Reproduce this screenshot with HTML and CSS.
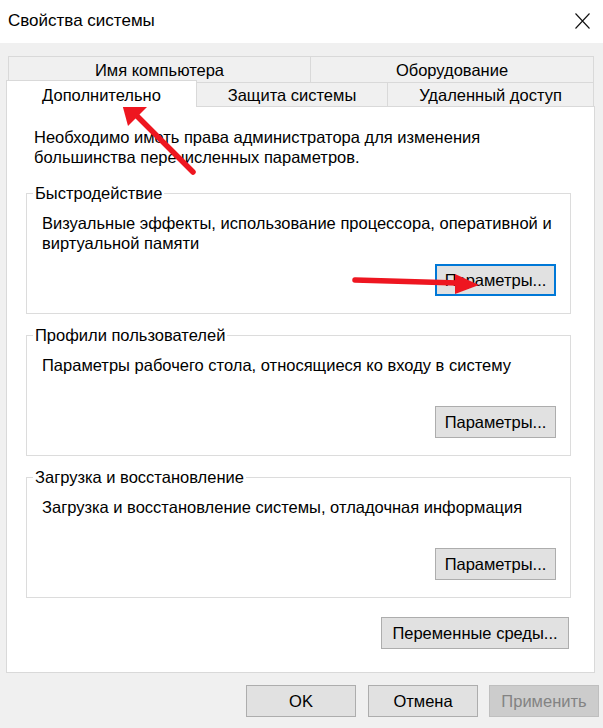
FILE: index.html
```html
<!DOCTYPE html>
<html lang="ru">
<head>
    <meta charset="UTF-8">
    <meta name="viewport" content="width=device-width, initial-scale=1.0">
    <title>Свойства системы</title>
    <link rel="stylesheet" href="styles.css">
</head>
<body>
<div class="window">

    <!-- Заголовок окна -->
    <div class="titlebar">
        <span class="title">Свойства системы</span>
        <svg class="close" width="15" height="16" viewBox="0 0 15 16">
            <path d="M0.5 0.5 L14.5 15.5 M14.5 0.5 L0.5 15.5" stroke="#111" stroke-width="1.1" fill="none"/>
        </svg>
    </div>

    <!-- Вкладки -->
    <div class="tabs">
        <div class="tab-row row-back">
            <div class="tab">Имя компьютера</div>
            <div class="tab">Оборудование</div>
        </div>
        <div class="tab-row row-front">
            <div class="tab active">Дополнительно</div>
            <div class="tab">Защита системы</div>
            <div class="tab">Удаленный доступ</div>
        </div>
    </div>

    <!-- Содержимое вкладки -->
    <div class="panel">
        <p class="intro">Необходимо иметь права администратора для изменения<br>большинства перечисленных параметров.</p>

        <fieldset class="group">
            <legend>Быстродействие</legend>
            <p class="group-text">Визуальные эффекты, использование процессора, оперативной и виртуальной памяти</p>
            <div class="group-actions">
                <button class="btn btn-focus">Параметры...</button>
            </div>
        </fieldset>

        <fieldset class="group">
            <legend>Профили пользователей</legend>
            <p class="group-text">Параметры рабочего стола, относящиеся ко входу в систему</p>
            <div class="group-actions">
                <button class="btn">Параметры...</button>
            </div>
        </fieldset>

        <fieldset class="group">
            <legend>Загрузка и восстановление</legend>
            <p class="group-text">Загрузка и восстановление системы, отладочная информация</p>
            <div class="group-actions">
                <button class="btn">Параметры...</button>
            </div>
        </fieldset>

        <div class="env-row">
            <button class="btn btn-env">Переменные среды...</button>
        </div>
    </div>

    <!-- Кнопки диалога -->
    <div class="footer">
        <button class="btn btn-dialog">OK</button>
        <button class="btn btn-dialog">Отмена</button>
        <button class="btn btn-dialog" disabled>Применить</button>
    </div>

    <!-- Красные стрелки поверх окна -->
    <svg class="arrows" width="603" height="728" viewBox="0 0 603 728">
        <line x1="193" y1="172" x2="133" y2="112" stroke="#ee1620" stroke-width="5.5" stroke-linecap="round"/>
        <polygon points="121,100 147,107 128,126" fill="#ee1620"/>
        <line x1="355" y1="280" x2="458" y2="283" stroke="#ee1620" stroke-width="5.5" stroke-linecap="round"/>
        <polygon points="479,285 455,274 455,294" fill="#ee1620"/>
    </svg>
</div>
</body>
</html>
```

FILE: styles.css
```css
/* Основа */
* {
    box-sizing: border-box;
}

body {
    margin: 0;
    background-color: #f0f0f0;
    font-family: "Liberation Sans", Arial, sans-serif;
    font-size: 16.5px;
    line-height: 20px;
    color: #000;
}

.window {
    position: relative;
    height: 728px;
    overflow: hidden;
}

/* Заголовок */
.titlebar {
    height: 43px;
    background-color: #fff;
    display: flex;
    align-items: center;
    justify-content: space-between;
    padding: 0 13px 1px 8px;
}

.title {
    font-size: 17px;
}

/* Вкладки */
.tabs {
    margin: 13px 9px 0 8px;
}

.tab-row {
    display: grid;
}

.row-back {
    grid-template-columns: 303px 1fr;
    height: 26px;
}

.row-front {
    grid-template-columns: 189px 191px 1fr;
    height: 24px;
}

.tab {
    display: flex;
    align-items: center;
    justify-content: center;
    background-color: #f0f0f0;
    border: 1px solid #d9d9d9;
    border-bottom: none;
    margin-left: -1px;
}

.tab:first-child {
    margin-left: 0;
}

.tab.active {
    position: relative;
    z-index: 1;
    background-color: #fff;
    margin: -2px 0 -1px -2px;
    padding-top: 1px;
}

/* Панель */
.panel {
    margin: 0 8px 0 6px;
    background-color: #fff;
    border: 1px solid #d9d9d9;
    padding: 20px 23px 23px 19px;
}

.intro {
    margin: 0 0 16px 8px;
}

.group {
    margin: 11px 0 0;
    padding: 0 14px 17px 15px;
    border: 1px solid #dcdcdc;
    min-width: 0;
}

.intro + .group {
    margin-top: 0;
}

.group legend {
    padding: 0 2px;
    margin-left: -9px;
}

.group-text {
    margin: 10px 0 0;
    min-height: 40px;
}

.group-actions {
    display: flex;
    justify-content: flex-end;
    margin-top: 11px;
}

.env-row {
    display: flex;
    justify-content: flex-end;
    margin: 19px 2px 0 0;
}

/* Кнопки */
.btn {
    height: 32px;
    padding: 0;
    font-family: inherit;
    font-size: 16.5px;
    color: #000;
    background-color: #e1e1e1;
    border: 1px solid #adadad;
    border-radius: 0;
}

.group .btn {
    width: 121px;
}

.btn-focus {
    border: 2px solid #0078d7;
}

.btn-env {
    width: 188px;
}

.btn:disabled {
    background-color: #cccccc;
    border-color: #bfbfbf;
    color: #838383;
}

/* Нижние кнопки */
.footer {
    display: flex;
    justify-content: flex-end;
    gap: 12px;
    padding: 12px 4px 0 0;
}

.btn-dialog {
    width: 110px;
}

.btn-dialog:last-child {
    margin-left: -1px;
}

/* Стрелки */
.arrows {
    position: absolute;
    top: 0;
    left: 0;
    pointer-events: none;
}
```
